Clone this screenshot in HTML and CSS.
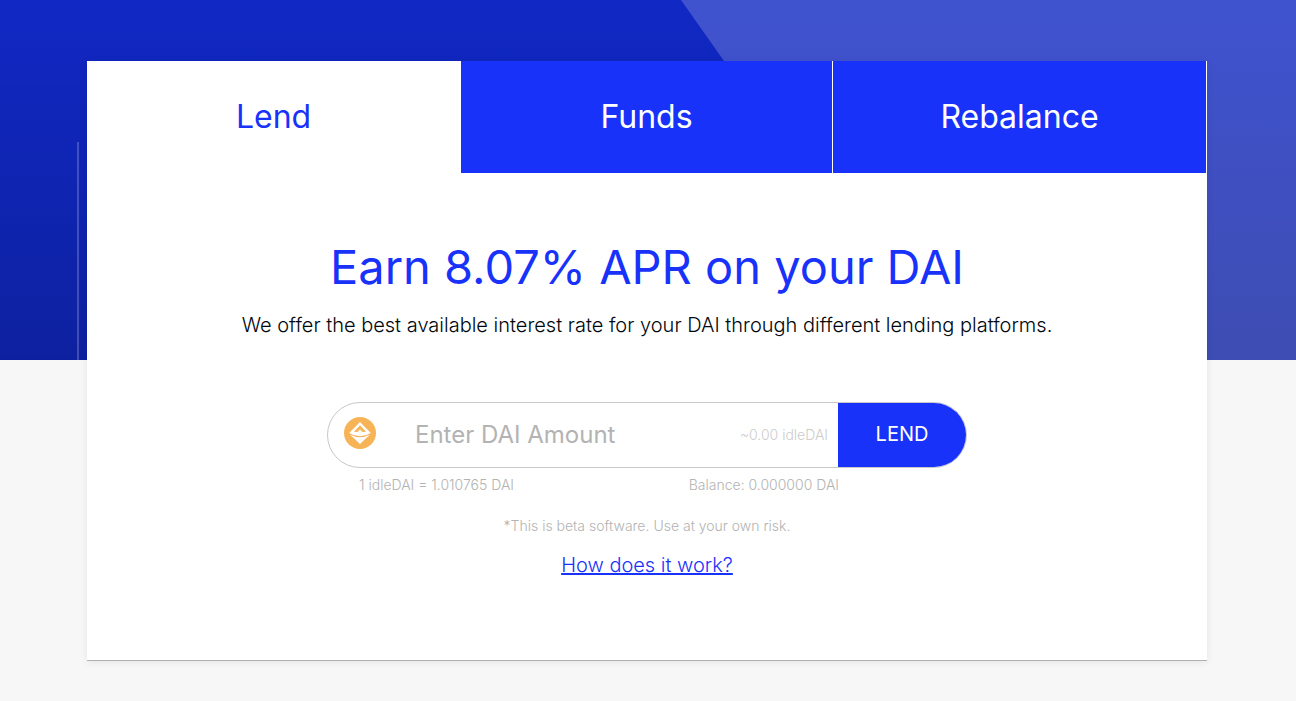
FILE: index.html
```html
<!DOCTYPE html>
<html lang="en">
<head>
<meta charset="utf-8">
<meta name="viewport" content="width=device-width, initial-scale=1">
<title>Lend DAI</title>
<link rel="stylesheet" href="styles.css">
</head>
<body>
<div class="hero" aria-hidden="true">
  <div class="hero-shape"></div>
  <div class="hero-line"></div>
</div>
<main class="page">
  <section class="card">
    <nav class="tabs">
      <button class="tab tab-active" type="button">Lend</button>
      <button class="tab" type="button">Funds</button>
      <button class="tab" type="button">Rebalance</button>
    </nav>
    <div class="content">
      <h1 class="title">Earn 8.07% APR on your DAI</h1>
      <p class="subtitle">We offer the best available interest rate for your DAI through different lending platforms.</p>
      <form class="lend-form">
        <div class="field">
          <svg class="coin" viewBox="0 0 32 32" aria-hidden="true">
            <circle cx="16" cy="16" r="16" fill="#f7b457"/>
            <path fill="#fff" fill-rule="evenodd" d="M16 5 26.800 16Q16 22.500 5.200 16ZM16 8.200 10 14.800Q16 15.600 22 14.800Z"/>
            <path fill="#fff" d="M16 12.500 19 15.500H13Z"/>
            <path fill="#fff" d="M6 17.500Q16 23 26 17.500L16 27Z"/>
          </svg>
          <input class="amount" type="text" aria-label="DAI amount" placeholder="Enter DAI Amount">
          <span class="estimate">~0.00 idleDAI</span>
          <button class="submit" type="button">LEND</button>
        </div>
        <div class="details">
          <span>1 idleDAI = 1.010765 DAI</span>
          <span>Balance: 0.000000 DAI</span>
        </div>
      </form>
      <p class="notice">*This is beta software. Use at your own risk.</p>
      <a class="help" href="#">How does it work?</a>
    </div>
  </section>
</main>
</body>
</html>
```
FILE: styles.css
```css
* {
  box-sizing: border-box;
}

body {
  margin: 0;
  position: relative;
  background: #f7f7f7;
  color: #00070e;
  font-family: Inter, "Liberation Sans", sans-serif;
  font-weight: 300;
}

button,
input {
  font: inherit;
}

.hero {
  position: absolute;
  top: 0;
  left: 0;
  right: 0;
  height: 360px;
  overflow: hidden;
  background: linear-gradient(#1128c4, #0d21a0);
}

.hero-shape {
  position: absolute;
  top: 0;
  bottom: 0;
  left: 681px;
  right: 0;
  background: rgba(255, 255, 255, 0.2);
  clip-path: polygon(0 0, 100% 0, 100% 100%, 255px 100%, 43px 61px);
}

.hero-line {
  position: absolute;
  top: 142px;
  bottom: 0;
  left: 77px;
  width: 2px;
  background: rgba(255, 255, 255, 0.2);
}

.page {
  position: relative;
  padding: 61px 89px 40px 87px;
}

.card {
  background: #fff;
  box-shadow: 0 1px 0 rgba(0, 0, 0, 0.25), 0 2px 8px rgba(0, 0, 0, 0.08);
}

.tabs {
  display: grid;
  grid-template-columns: 374fr 372fr 374fr;
}

.tab {
  height: 112px;
  padding: 0 0 2px;
  border: 0;
  border-right: 1px solid #fff;
  background: #1832fa;
  color: #fff;
  font-size: 32px;
  font-weight: 400;
}

.tab-active {
  background: #fff;
  color: #1832fa;
}

.content {
  display: flex;
  flex-direction: column;
  align-items: center;
  padding: 64px 24px 83px;
  text-align: center;
}

.title {
  margin: 0;
  color: #1832fa;
  font-size: 47px;
  font-weight: 400;
  line-height: 60px;
}

.subtitle {
  margin: 12px 0 61px;
  font-size: 20px;
  line-height: 32px;
}

.lend-form {
  width: 100%;
  max-width: 640px;
}

.field {
  display: flex;
  align-items: center;
  height: 66px;
  padding-left: 16px;
  overflow: hidden;
  border: 1px solid #c8c8c8;
  border-radius: 33px;
  background: #fff;
}

.coin {
  flex: none;
  width: 32px;
  height: 32px;
  margin-bottom: 4px;
}

.amount {
  flex: 1;
  min-width: 0;
  height: 64px;
  padding: 0 0 2px 39px;
  border: 0;
  outline: 0;
  background: none;
  font-size: 24px;
  font-weight: 400;
}

.amount::placeholder {
  color: #b3b3b3;
  opacity: 1;
}

.estimate {
  padding: 0 10px 2px;
  color: #ccc;
  font-size: 14px;
}

.submit {
  align-self: stretch;
  width: 128px;
  padding: 0 0 2px;
  border: 0;
  background: #1832fa;
  color: #fff;
  font-size: 20px;
  font-weight: 400;
}

.details {
  display: flex;
  justify-content: space-between;
  padding: 8px 128px 0 32px;
  color: #b3b3b3;
  font-size: 14px;
  line-height: 18px;
}

.notice {
  margin: 22px 0 17px;
  color: #b3b3b3;
  font-size: 14px;
  line-height: 20px;
}

.help {
  color: #1832fa;
  font-size: 20px;
  line-height: 24px;
}
```
